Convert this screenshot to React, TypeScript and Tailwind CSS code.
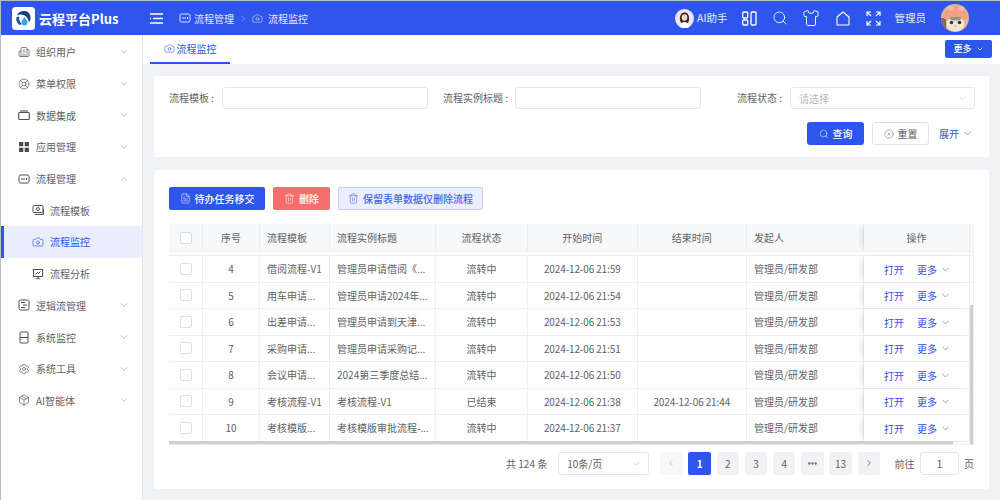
import React from "react";
import { Building2, LifeBuoy, ChevronDown, ChevronUp, ChevronLeft, ChevronRight, Camera, Settings, Package, Search, Shirt, Trash2, FileText, CircleX, Ellipsis } from "lucide-react";

const font = { fontFamily: '"Noto Sans CJK SC", "Noto Sans", sans-serif' };

function Logo() {
  return (
    <svg width="23" height="23" viewBox="0 0 23 23" className="shrink-0">
      <rect width="23" height="23" rx="3.5" fill="#fff" />
      <path d="M5 8.500C6 5 9.500 3.500 13 4c3.500.6 5.500 3.400 5.500 6.500 0 2-.6 3.600-1.600 5-.3-3-1.600-5.300-3.900-6.800-2.500-1.400-5.500-1.500-8-.2z" fill="#17407f" />
      <path d="M4.500 10c-.8 3 .2 6 3 8l2.200-1c-2-2-2.900-4-2.400-7.500z" fill="#234f9b" />
      <path d="M12.500 10c2 2.500 3 4 3 5.500a3 3 0 0 1-6 0c0-1.500 1-3 3-5.500z" fill="#35a7e8" />
    </svg>
  );
}

function GirlAvatar() {
  return (
    <svg width="19" height="19" viewBox="0 0 19 19" className="shrink-0">
      <circle cx="9.500" cy="9.500" r="9.500" fill="#f0e4f0" />
      <path d="M5 11c-.5-5 1.500-7.500 4.500-7.500S14.500 6 14 11l-1 3H6z" fill="#3b2628" />
      <ellipse cx="9.500" cy="8.500" rx="2.800" ry="3.300" fill="#f5d3c6" />
      <path d="M4.500 18c.5-3.500 2.500-5 5-5s4.500 1.500 5 5a9.500 9.500 0 0 1-10 0z" fill="#fff" />
    </svg>
  );
}

function CatAvatar() {
  return (
    <svg width="28" height="28" viewBox="0 0 28 28" className="shrink-0">
      <defs><clipPath id="catclip"><circle cx="14" cy="14" r="14" /></clipPath></defs>
      <g clipPath="url(#catclip)">
        <rect width="28" height="28" fill="#e3b48f" />
        <rect y="14" width="5" height="14" fill="#8a6a4c" />
        <path d="M3 15C3 7 8 2 15 2s11 5 11 13z" fill="#f2a184" />
        <ellipse cx="10" cy="4" rx="3" ry="2.500" fill="#f7b9a2" />
        <ellipse cx="20" cy="5" rx="3" ry="2.500" fill="#f7b9a2" />
        <ellipse cx="14.500" cy="20" rx="9" ry="7.500" fill="#efe7d6" />
        <ellipse cx="14.500" cy="14.500" rx="6" ry="2" fill="#9b9585" />
        <circle cx="10.500" cy="18.500" r="1.800" fill="#2f3a30" />
        <circle cx="18.500" cy="18.500" r="1.800" fill="#2f3a30" />
        <circle cx="14.500" cy="22" r=".8" fill="#d98a80" />
      </g>
    </svg>
  );
}

function FlowIcon({ className = "" }: { className?: string }) {
  return (
    <svg width="12" height="12" viewBox="0 0 12 12" fill="none" stroke="currentColor" strokeWidth="1" className={className}>
      <rect x="1" y="2" width="10" height="8" rx="1.500" />
      <path d="M4 5v2M6 5v2M8.500 5v2" />
    </svg>
  );
}
function DataIcon() {
  return (
    <svg width="12" height="12" viewBox="0 0 12 12" fill="none" stroke="currentColor" strokeWidth="1.100">
      <rect x=".7" y="3.500" width="10.600" height="7" rx="1" />
      <path d="M2 2h8" />
    </svg>
  );
}
function GridIcon() {
  return (
    <svg width="10" height="10" viewBox="0 0 10 10" fill="#4a4a4a" className="ml-px">
      <rect width="4.300" height="4.300" rx=".5" /><rect x="5.700" width="4.300" height="4.300" rx=".5" />
      <rect y="5.700" width="4.300" height="4.300" rx=".5" /><rect x="5.700" y="5.700" width="4.300" height="4.300" rx=".5" />
    </svg>
  );
}
function TemplateIcon() {
  return (
    <svg width="12" height="12" viewBox="0 0 12 12" fill="none" stroke="currentColor" strokeWidth="1">
      <rect x="1" y="1.500" width="10" height="7" rx="1" />
      <circle cx="6" cy="5" r="1.500" />
      <path d="M3 10.500h8.500V5" />
    </svg>
  );
}
function LogicIcon() {
  return (
    <svg width="12" height="12" viewBox="0 0 12 12" fill="none" stroke="currentColor" strokeWidth="1">
      <rect x="1" y="1" width="10" height="10" rx="1.500" />
      <path d="M3 3.500h4M5 6h4M3 8.500h4" />
    </svg>
  );
}
function MonitorIcon() {
  return (
    <svg width="12" height="13" viewBox="0 0 12 13" fill="none" stroke="currentColor" strokeWidth="1">
      <rect x="2" y="1" width="8" height="11" rx="1" />
      <path d="M2 6.500h8M4 3.500v.5M4 8.500v.5" />
    </svg>
  );
}
function ChartIcon() {
  return (
    <svg width="12" height="12" viewBox="0 0 12 12" fill="none" stroke="currentColor" strokeWidth="1">
      <path d="M.8 1.500h10.400M1.500 1.500v7h9v-7M6 8.500v1.500M4 11l2-1 2 1M3.500 6.500 5.500 4.500 6.500 5.500 8.500 3.500" />
    </svg>
  );
}

function SideItem({ icon, label, open, sub, active }: { icon: React.ReactNode; label: string; open?: boolean; sub?: boolean; active?: boolean }) {
  return (
    <div className={`flex h-[31.7px] items-center text-[10px] ${active ? "border-l-[3px] border-[#2e55ec] bg-[#e9edfd] pl-[28px] text-[#2e55ec]" : sub ? "pl-[31px] text-[#5f6266]" : "pl-[17px] text-[#5f6266]"}`}>
      <span className={`flex w-[18px] shrink-0 items-center ${active ? "text-[#2e55ec]" : "text-[#4f4f4f]"}`}>{icon}</span>
      <span>{label}</span>
      {!sub && (
        <span className="ml-auto mr-[13px] text-[#888]">
          {open ? <ChevronUp size={10} strokeWidth={1.300} /> : <ChevronDown size={10} strokeWidth={1.300} />}
        </span>
      )}
    </div>
  );
}

function Sidebar() {
  const i = 12;
  const sw = 1.3;
  return (
    <aside className="w-[142px] shrink-0 border-r border-[#e4e6eb] bg-white pt-px">
      <SideItem icon={<Building2 size={i} strokeWidth={sw} />} label="组织用户" />
      <SideItem icon={<LifeBuoy size={i} strokeWidth={sw} />} label="菜单权限" />
      <SideItem icon={<DataIcon />} label="数据集成" />
      <SideItem icon={<GridIcon />} label="应用管理" />
      <SideItem icon={<FlowIcon />} label="流程管理" open />
      <SideItem sub icon={<TemplateIcon />} label="流程模板" />
      <SideItem sub active icon={<Camera size={i} strokeWidth={sw} />} label="流程监控" />
      <SideItem sub icon={<ChartIcon />} label="流程分析" />
      <SideItem icon={<LogicIcon />} label="逻辑流管理" />
      <SideItem icon={<MonitorIcon />} label="系统监控" />
      <SideItem icon={<Settings size={i} strokeWidth={sw} />} label="系统工具" />
      <SideItem icon={<Package size={i} strokeWidth={sw} />} label="AI智能体" />
    </aside>
  );
}

function Header() {
  return (
    <header className="flex h-[34px] shrink-0 items-center bg-[#2e55ec] text-white">
      <div className="ml-[11px] flex w-[127px] items-center gap-[4px]">
        <Logo />
        <span className="text-[13px] font-bold leading-none">云程平台Plus</span>
      </div>
      <svg width="13" height="11" viewBox="0 0 13 11" fill="none" stroke="#fff" strokeWidth="1.500" className="ml-[11px]">
        <path d="M0 1h13M3 5.500h10M0 10h13" />
        <path d="M0 5.500h1" />
      </svg>
      <div className="ml-[16px] flex items-center text-[10px] text-[#e4e9fd]">
        <FlowIcon />
        <span className="ml-[3px]">流程管理</span>
        <ChevronRight size={9} className="mx-[4.5px] text-[#8ea3f3]" />
        <Camera size={11} strokeWidth={1.200} />
        <span className="ml-[5px]">流程监控</span>
      </div>
      <div className="ml-auto flex items-center">
        <GirlAvatar />
        <span className="ml-[3px] text-[10.5px] text-[#e9edfd]">AI助手</span>
        <svg width="15" height="15" viewBox="0 0 15 15" fill="none" stroke="#fff" strokeWidth="1.300" className="ml-[14px]">
          <rect x=".7" y="1" width="5" height="6" rx="1" /><rect x=".7" y="9" width="5" height="5" rx="1" />
          <rect x="9" y="1" width="5" height="13" rx="1" />
        </svg>
        <Search size={16} strokeWidth={1.300} className="ml-[15px]" />
        <Shirt size={18} strokeWidth={1.200} className="ml-[14px]" />
        <svg width="14" height="15" viewBox="0 0 14 15" fill="none" stroke="#fff" strokeWidth="1.100" className="ml-[16px]">
          <path d="M7 1 1 6v8h12V6z" strokeLinejoin="round" />
        </svg>
        <svg width="15" height="15" viewBox="0 0 15 15" fill="none" stroke="#fff" strokeWidth="1.200" className="ml-[16px]">
          <path d="M1 5V1h4M1 1l4 4M10 1h4v4M14 1l-4 4M1 10v4h4M1 14l4-4M14 10v4h-4M14 14l-4-4" />
        </svg>
        <span className="ml-[14px] text-[10.5px] text-[#e9edfd]">管理员</span>
        <span className="ml-[15px] mr-[31px]"><CatAvatar /></span>
      </div>
    </header>
  );
}

function Tabs() {
  return (
    <div className="flex h-[29px] shrink-0 items-center bg-white pl-[7px] pr-[8px]">
      <div className="flex h-full w-[80px] items-center justify-center gap-[2px] border-b-2 border-[#2e55ec] text-[10px] text-[#2e55ec]">
        <Camera size={11} strokeWidth={1.200} />
        <span>流程监控</span>
      </div>
      <button className="ml-auto mb-[1px] flex h-[18px] w-[47px] items-center justify-center gap-[4px] rounded-[2px] bg-[#2e55ec] text-[9px] font-medium text-white">
        更多 <ChevronDown size={8} />
      </button>
    </div>
  );
}

function Field({ label, className, labelClass }: { label: string; className: string; labelClass: string }) {
  return (
    <div className="flex items-center">
      <span className={`${labelClass} shrink-0 pb-[2px] text-[10px] text-[#606266]`}>{label}</span>
      <div className={`${className} h-[22px] rounded-[3px] border border-[#e6e8ee] bg-white`} />
    </div>
  );
}

function SearchCard() {
  return (
    <section className="h-[81px] rounded-[2px] bg-white pl-[15px] pr-[14px] pt-[11px]">
      <div className="flex items-center">
        <Field label="流程模板 :" labelClass="w-[53px]" className="w-[206px]" />
        <div className="ml-[15px]"><Field label="流程实例标题 :" labelClass="w-[72px]" className="w-[186px]" /></div>
        <div className="ml-[36px] flex items-center">
          <span className="w-[53px] shrink-0 pb-[2px] text-[10px] text-[#606266]">流程状态 :</span>
          <div className="flex h-[22px] w-[185px] items-center justify-between rounded-[3px] border border-[#e6e8ee] bg-white pl-[8px] pr-[6px] text-[10px] text-[#b4b7bd]">
            请选择 <ChevronDown size={11} strokeWidth={1.200} className="text-[#c0c4cc]" />
          </div>
        </div>
      </div>
      <div className="mt-[13px] flex items-center justify-end pr-[2px]">
        <button className="flex h-[23px] w-[57px] items-center justify-center gap-[4px] rounded-[3px] bg-[#2e55ec] text-[10px] font-medium text-white">
          <Search size={10} strokeWidth={1.300} /> 查询
        </button>
        <button className="ml-[8px] flex h-[23px] w-[57px] items-center justify-center gap-[4px] rounded-[3px] border border-[#dfe2e9] bg-white text-[10px] text-[#606266]">
          <CircleX size={10} strokeWidth={1.200} /> 重置
        </button>
        <button className="ml-[10px] flex items-center gap-[3px] text-[10px] text-[#2e55ec]">
          展开 <ChevronDown size={11} strokeWidth={1.300} />
        </button>
      </div>
    </section>
  );
}

const cols = "grid grid-cols-[34px_57px_70px_106px_92px_109.5px_109.5px_117px_106px_4px]";
const cellB = "border-r border-[#eceef2]";
const rows = [
  ["4", "借阅流程-V1", "管理员申请借阅《...", "流转中", "2024-12-06 21:59", ""],
  ["5", "用车申请...", "管理员申请2024年...", "流转中", "2024-12-06 21:54", ""],
  ["6", "出差申请...", "管理员申请到天津...", "流转中", "2024-12-06 21:53", ""],
  ["7", "采购申请...", "管理员申请采购记...", "流转中", "2024-12-06 21:51", ""],
  ["8", "会议申请...", "2024第三季度总结...", "流转中", "2024-12-06 21:50", ""],
  ["9", "考核流程-V1", "考核流程-V1", "已结束", "2024-12-06 21:38", "2024-12-06 21:44"],
  ["10", "考核模版...", "考核模版审批流程-...", "流转中", "2024-12-06 21:37", ""],
];

function Check() {
  return <span className="block h-[12px] w-[12px] rounded-[2px] border border-[#dcdfe6] bg-white" />;
}

const opCell = "relative border-r border-[#eceef2] shadow-[-5px_0_6px_-3px_rgba(0,0,0,0.12)]";

function Table() {
  return (
    <div className="relative mt-[14.5px] h-[221px] overflow-hidden border-b border-[#eceef2] text-[10px] text-[#606266]">
      <div className={`${cols} h-[28px] border-b border-[#eceef2] bg-[#f7f8f9]`}>
        <div className={`${cellB} flex items-center justify-center`}><Check /></div>
        <div className={`${cellB} flex items-center justify-center`}>序号</div>
        <div className={`${cellB} flex items-center pl-[7px]`}>流程模板</div>
        <div className={`${cellB} flex items-center pl-[7px]`}>流程实例标题</div>
        <div className={`${cellB} flex items-center justify-center`}>流程状态</div>
        <div className={`${cellB} flex items-center justify-center`}>开始时间</div>
        <div className={`${cellB} flex items-center justify-center`}>结束时间</div>
        <div className={`${cellB} flex items-center pl-[7px]`}>发起人</div>
        <div className={`${opCell} flex items-center justify-center bg-[#f7f8f9]`}>操作</div>
        <div />
      </div>
      <div className={`${cols} h-[4px] border-b border-[#eceef2]`}>
        <div className="col-span-8" />
        <div className={`${opCell} bg-white`} />
        <div />
      </div>
      {rows.map((r) => (
        <div key={r[0]} className={`${cols} h-[26.5px] border-b border-[#eceef2]`}>
          <div className={`${cellB} flex items-center justify-center`}><Check /></div>
          <div className={`${cellB} flex items-center justify-center`}>{r[0]}</div>
          <div className={`${cellB} flex items-center overflow-hidden whitespace-nowrap pl-[7px]`}>{r[1]}</div>
          <div className={`${cellB} flex items-center overflow-hidden whitespace-nowrap pl-[7px]`}>{r[2]}</div>
          <div className={`${cellB} flex items-center justify-center`}>{r[3]}</div>
          <div className={`${cellB} flex items-center justify-center tracking-[-0.12px]`}>{r[4]}</div>
          <div className={`${cellB} flex items-center justify-center tracking-[-0.12px]`}>{r[5]}</div>
          <div className={`${cellB} flex items-center pl-[7px]`}>管理员/研发部</div>
          <div className={`${opCell} flex items-center bg-white pl-[20px] pt-[1px] text-[#2e55ec]`}>
            <span>打开</span>
            <span className="ml-[13px]">更多</span>
            <ChevronDown size={11} strokeWidth={1.200} className="ml-[3px]" />
          </div>
          <div />
        </div>
      ))}
      <div className="absolute bottom-0 right-[1px] top-[81px] w-[3px] bg-[#cfcfcf]" />
      <div className="absolute bottom-0 left-0 h-[3px] w-[784px] bg-[#cfcfcf]" />
      <div className="absolute bottom-0 right-0 top-[28px] w-px bg-[#eceef2]" />
    </div>
  );
}

function Page({ n, active, dim }: { n: React.ReactNode; active?: boolean; dim?: boolean }) {
  return (
    <span className={`flex h-[22.5px] w-[22.5px] items-center justify-center rounded-[2px] text-[10px] ${active ? "bg-[#2e55ec] font-bold text-white" : dim ? "bg-[#f6f7f9] text-[#c0c4cc]" : "bg-[#f0f2f5] text-[#606266]"}`}>{n}</span>
  );
}

function Pagination() {
  return (
    <div className="mt-[7px] flex items-center justify-end text-[10px] text-[#606266]">
      <span className="mr-[11px]">共 124 条</span>
      <div className="mr-[11.5px] flex h-[22.5px] w-[90.5px] items-center justify-between rounded-[3px] border border-[#e3e5ea] pl-[8px] pr-[6px]">
        10条/页 <ChevronDown size={11} strokeWidth={1.200} className="text-[#b5b8be]" />
      </div>
      <div className="flex items-center gap-[5.7px]">
        <Page dim n={<ChevronLeft size={10} />} />
        <Page n="1" active />
        <Page n="2" />
        <Page n="3" />
        <Page n="4" />
        <Page n={<Ellipsis size={11} strokeWidth={3} className="text-[#555]" />} />
        <Page n="13" />
        <Page n={<ChevronRight size={10} />} />
      </div>
      <span className="ml-[14.5px]">前往</span>
      <div className="ml-[5.5px] flex h-[22.5px] w-[39px] items-center justify-center rounded-[3px] border border-[#e3e5ea]">1</div>
      <span className="ml-[5px]">页</span>
    </div>
  );
}

function TableCard() {
  return (
    <section className="mt-[13px] h-[319px] rounded-[2px] bg-white px-[15px] pt-[17px]">
      <div className="flex items-center text-[10px] font-medium">
        <button className="flex h-[22.5px] w-[96px] items-center justify-center gap-[4px] rounded-[2px] bg-[#2e55ec] text-white">
          <FileText size={11} strokeWidth={1.200} /> 待办任务移交
        </button>
        <button className="ml-[8px] flex h-[22.5px] w-[57px] items-center justify-center gap-[4px] rounded-[2px] bg-[#f76c6c] text-white">
          <Trash2 size={11} strokeWidth={1.200} /> 删除
        </button>
        <button className="ml-[8px] flex h-[22.5px] w-[145px] items-center justify-center gap-[4px] rounded-[2px] border border-[#c0ccf9] bg-[#eaeefd] text-[#3f62ee]">
          <Trash2 size={11} strokeWidth={1.200} /> 保留表单数据仅删除流程
        </button>
      </div>
      <Table />
      <Pagination />
    </section>
  );
}

export default function App() {
  return (
    <div style={font} className="flex h-[500px] w-[1000px] flex-col overflow-hidden border-l border-t border-[#b9bcc4] bg-[#f0f2f6]">
      <Header />
      <div className="flex min-h-0 flex-1">
        <Sidebar />
        <main className="flex min-w-0 flex-1 flex-col">
          <Tabs />
          <div className="pl-[11px] pr-[11px] pt-[12px]">
            <SearchCard />
            <TableCard />
          </div>
        </main>
      </div>
    </div>
  );
}
